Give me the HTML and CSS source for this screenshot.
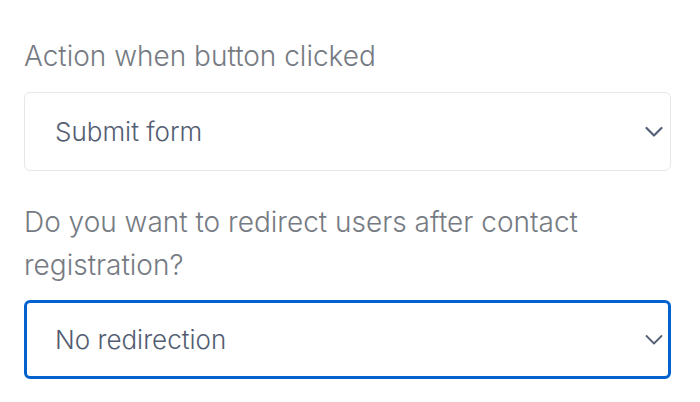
FILE: index.html
```html
<!DOCTYPE html>
<html>
<head>
<meta charset="utf-8">
<link rel="stylesheet" href="styles.css">
</head>
<body>
<div class="form">
  <div class="label label-first">Action when button clicked</div>
  <div class="select">
    <span class="value">Submit form</span>
    <svg class="chev" width="18" height="12" viewBox="0 0 18 12"><path d="M1.5 2 L9 9.5 L16.5 2" fill="none" stroke="#566178" stroke-width="2.2" stroke-linecap="round" stroke-linejoin="round"/></svg>
  </div>
  <div class="label label-second">Do you want to redirect users after contact registration?</div>
  <div class="select focused">
    <span class="value">No redirection</span>
    <svg class="chev" width="18" height="12" viewBox="0 0 18 12"><path d="M1.5 2 L9 9.5 L16.5 2" fill="none" stroke="#566178" stroke-width="1.8" stroke-linecap="round" stroke-linejoin="round"/></svg>
  </div>
</div>
</body>
</html>
```
FILE: styles.css
```css
html, body {
  margin: 0;
  padding: 0;
  background: #ffffff;
}
body {
  font-family: Inter, "Noto Sans", sans-serif;
}
.form {
  width: 647px;
  padding: 35px 0 0 24px;
  display: flex;
  flex-direction: column;
}
.label {
  font-size: 28px;
  font-weight: 300;
  line-height: 43px;
  color: #767b83;
}
.label-first {
  margin-bottom: 14px;
}
.label-second {
  margin-top: 30px;
  margin-bottom: 13px;
  width: 600px;
}
.select {
  box-sizing: border-box;
  height: 79px;
  border: 1px solid #e5e7eb;
  border-radius: 6px;
  display: flex;
  align-items: center;
  justify-content: space-between;
  padding: 0 7px 0 30px;
}
.select.focused {
  border: 3px solid #0061cf;
  padding: 0 5px 0 28px;
}
.value {
  font-size: 26px;
  font-weight: 300;
  color: #535d72;
}
.chev {
  display: block;
}
```
